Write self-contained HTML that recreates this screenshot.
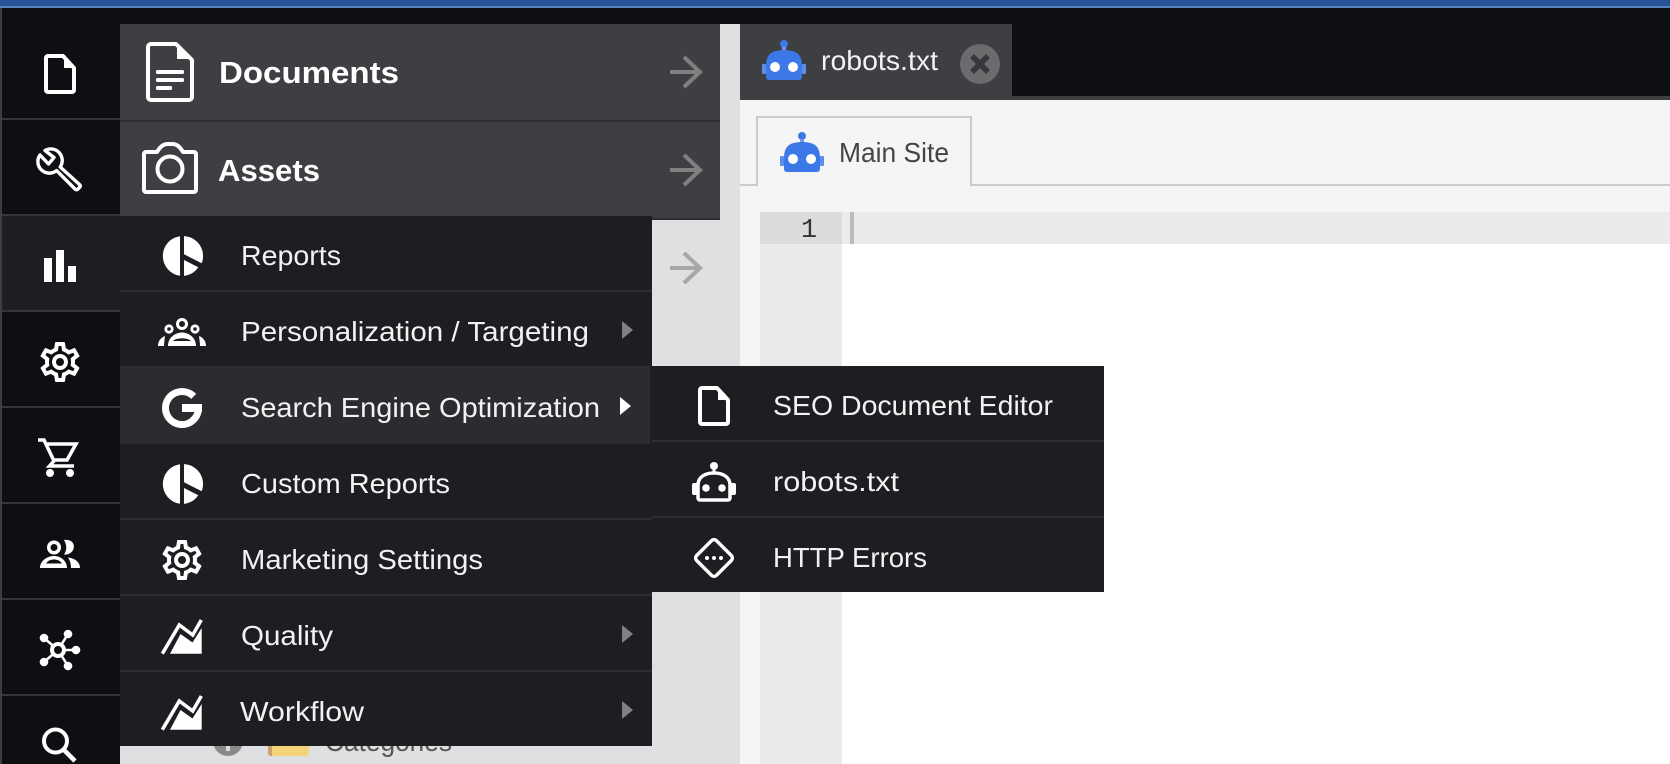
<!DOCTYPE html>
<html><head><meta charset="utf-8"><title>robots.txt</title>
<style>html,body{margin:0;padding:0;background:#fff}svg{display:block}text{font-family:"Liberation Sans",sans-serif}</style></head>
<body>
<svg width="1670" height="764" viewBox="0 0 1670 764" xmlns="http://www.w3.org/2000/svg">
<defs>
<path id="gear" d="M19.43 12.98c.04-.32.07-.64.07-.98s-.03-.66-.07-.98l2.11-1.65c.19-.15.24-.42.12-.64l-2-3.46c-.12-.22-.39-.3-.61-.22l-2.49 1c-.52-.4-1.08-.73-1.69-.98l-.38-2.65C14.46 2.18 14.25 2 14 2h-4c-.25 0-.46.18-.49.42l-.38 2.65c-.61.25-1.17.59-1.69.98l-2.49-1c-.23-.09-.49 0-.61.22l-2 3.46c-.13.22-.07.49.12.64l2.11 1.65c-.04.32-.07.65-.07.98s.03.66.07.98l-2.11 1.65c-.19.15-.24.42-.12.64l2 3.46c.12.22.39.3.61.22l2.49-1c.52.4 1.08.73 1.69.98l.38 2.65c.03.24.24.42.49.42h4c.25 0 .46-.18.49-.42l.38-2.65c.61-.25 1.17-.59 1.69-.98l2.49 1c.23.09.49 0 .61-.22l2-3.46c.12-.22.07-.49-.12-.64l-2.11-1.65zm-1.98-1.71c.04.31.05.52.05.73 0 .21-.02.43-.05.73l-.14 1.13.89.7 1.08.84-.7 1.21-1.27-.51-1.04-.42-.9.68c-.43.32-.84.56-1.25.73l-1.06.43-.16 1.13-.2 1.35h-1.4l-.19-1.35-.16-1.13-1.06-.43c-.43-.18-.83-.41-1.23-.71l-.91-.7-1.06.43-1.27.51-.7-1.21 1.08-.84.89-.7-.14-1.13c-.03-.31-.05-.54-.05-.74s.02-.43.05-.73l.14-1.13-.89-.7-1.08-.84.7-1.21 1.27.51 1.04.42.9-.68c.43-.32.84-.56 1.25-.73l1.06-.43.16-1.13.2-1.35h1.39l.19 1.35.16 1.13 1.06.43c.43.18.83.41 1.23.71l.91.7 1.06-.43 1.27-.51.7 1.21-1.07.85-.89.7.14 1.13zM12 8c-2.21 0-4 1.79-4 4s1.79 4 4 4 4-1.79 4-4-1.79-4-4-4zm0 6c-1.1 0-2-.9-2-2s.9-2 2-2 2 .9 2 2-.9 2-2 2z"/>
<g id="blue">
<circle cx="784" cy="44" r="4" fill="#3c78e8"/><rect x="782" y="47" width="4" height="5" fill="#6f9bec"/>
<path d="M766 66C766 54 772 50 784 50S802 54 802 66V77a3 3 0 0 1-3 3H769a3 3 0 0 1-3-3Z" fill="#3c78e8"/>
<rect x="762" y="64" width="4" height="10" rx="1" fill="#5a8eea"/><rect x="802" y="64" width="4" height="10" rx="1" fill="#5a8eea"/>
<circle cx="775" cy="67" r="5" fill="#fff"/><circle cx="793" cy="67" r="5" fill="#fff"/>
</g>
<g id="pie" fill="#fff">
<path d="M180 236.2A20 20 0 0 0 180 275.8Z"/><path d="M184 236.1A20 20 0 0 1 201.7 263.3L184 254.3Z"/><path d="M184 260L198.3 267.3A20 20 0 0 1 184 275.9Z"/>
</g>
<g id="chart" fill="#fff">
<path d="M162.300 653.700L179.300 625L192.700 635L201.300 620" fill="none" stroke="#fff" stroke-width="3.500"/>
<path d="M170 653.700L180.500 634L192.500 642.500L201.700 628V653.700Z"/>
</g>
<path id="arrow" d="M670 0H700M684-15L700 0L684 15" fill="none" stroke-width="4"/>
</defs>

<!-- base -->
<rect width="1670" height="764" fill="#fff"/>
<rect width="1670" height="6" fill="#285296"/>
<rect y="6" width="1670" height="2" fill="#5a82bb"/>
<rect y="8" width="1670" height="88" fill="#0d0f12"/>
<rect y="96" x="740" width="930" height="4" fill="#3d3f42"/>
<rect y="8" width="2" height="756" fill="#3c3e41"/>
<rect x="2" y="8" width="118" height="756" fill="#0d0f12"/>
<rect x="2" y="216" width="118" height="94" fill="#1c1e21"/>
<g fill="#333538">
<rect x="2" y="118" width="118" height="2"/><rect x="2" y="214" width="118" height="2"/><rect x="2" y="310" width="118" height="2"/><rect x="2" y="406" width="118" height="2"/><rect x="2" y="502" width="118" height="2"/><rect x="2" y="598" width="118" height="2"/><rect x="2" y="694" width="118" height="2"/>
</g>

<!-- tree panel -->
<rect x="120" y="24" width="620" height="740" fill="#dfe0e1"/>
<use href="#arrow" transform="translate(0,268)" stroke="#a6a7a8"/>
<circle cx="228" cy="741" r="15" fill="#8a8a8a"/><rect x="226" y="745" width="4" height="6" fill="#ddd"/>
<path d="M268 740H309V753a3 3 0 0 1-3 3H271a3 3 0 0 1-3-3Z" fill="#f5d378"/><path d="M268 740H272V756H271a3 3 0 0 1-3-3Z" fill="#c9a36a"/>
<text x="325" y="751" font-size="28" fill="#555" textLength="127" lengthAdjust="spacingAndGlyphs">Categories</text>

<!-- content -->
<rect x="740" y="100" width="930" height="664" fill="#f5f5f5"/>
<rect x="842" y="244" width="828" height="520" fill="#fff"/>
<rect x="760" y="244" width="82" height="520" fill="#ebebeb"/>
<rect x="760" y="212" width="82" height="32" fill="#dcdcdc"/>
<rect x="842" y="212" width="828" height="32" fill="#ebebeb"/>
<rect x="850" y="212" width="4" height="32" fill="#bbb"/>
<text x="809" y="237" font-size="27" fill="#333" text-anchor="middle" style="font-family:'Liberation Mono',monospace">1</text>
<rect x="740" y="184" width="16" height="2" fill="#ccc"/><rect x="972" y="184" width="698" height="2" fill="#ccc"/>
<path d="M757 186V117H971V186" fill="#f5f5f5" stroke="#ccc" stroke-width="2"/>
<use href="#blue" transform="translate(18,92)"/>
<text x="839" y="162" font-size="28" fill="#444" textLength="110" lengthAdjust="spacingAndGlyphs">Main Site</text>

<!-- editor tab -->
<rect x="740" y="24" width="272" height="76" fill="#3d3f42"/>
<use href="#blue"/>
<text x="821" y="70" font-size="28" fill="#f2f2f2" textLength="117" lengthAdjust="spacingAndGlyphs">robots.txt</text>
<circle cx="980" cy="64" r="20" fill="#6a6b6c"/>
<path d="M972 56L988 72M988 56L972 72" stroke="#35373a" stroke-width="5.500" fill="none"/>

<!-- top panels -->
<rect x="120" y="24" width="600" height="96" fill="#3d3f42"/>
<rect x="120" y="120" width="600" height="2" fill="#2c2e30"/>
<rect x="120" y="122" width="600" height="96" fill="#3d3f42"/>
<rect x="120" y="218" width="600" height="2" fill="#2b2c2e"/>
<use href="#arrow" transform="translate(0,72)" stroke="#808080"/>
<use href="#arrow" transform="translate(0,170)" stroke="#808080"/>
<path d="M148 47a3 3 0 0 1 3-3H176L192 60V97a3 3 0 0 1-3 3H151a3 3 0 0 1-3-3Z" fill="none" stroke="#fff" stroke-width="4" stroke-linejoin="round"/>
<path d="M177 46V59H192Z" fill="#fff"/>
<rect x="156" y="70" width="28" height="4" rx="1.500" fill="#fff"/><rect x="156" y="78" width="28" height="4" rx="1.500" fill="#fff"/><rect x="156" y="86" width="16" height="4" rx="1.500" fill="#fff"/>
<text x="219" y="83" font-size="31" font-weight="bold" fill="#fff" textLength="180" lengthAdjust="spacingAndGlyphs">Documents</text>
<path d="M146 152H157C160 147 163 144 168 144H172C177 144 180 147 183 152H194a2 2 0 0 1 2 2V190a2 2 0 0 1-2 2H146a2 2 0 0 1-2-2V154a2 2 0 0 1 2-2Z" fill="none" stroke="#fff" stroke-width="4" stroke-linejoin="round"/>
<circle cx="170" cy="169" r="12.500" fill="none" stroke="#fff" stroke-width="4"/>
<text x="218" y="181" font-size="31" font-weight="bold" fill="#fff" textLength="102" lengthAdjust="spacingAndGlyphs">Assets</text>

<!-- left rail icons -->
<path d="M46 58a2 2 0 0 1 2-2H63L74 68V90a2 2 0 0 1-2 2H48a2 2 0 0 1-2-2Z" fill="none" stroke="#fff" stroke-width="4" stroke-linejoin="round"/>
<path d="M64 56V68H74Z" fill="#fff"/>
<path d="M45 150.500L54 157.500L48.500 164L40 155A11.500 11.500 0 0 0 56.600 170.600L75 189Q76.500 190.500 78 189L79.500 187.500Q81 186 79.500 184.500L60.200 167A11.500 11.500 0 0 0 45 150.500Z" fill="none" stroke="#fff" stroke-width="3.400" stroke-linejoin="round"/>
<g fill="#fff"><rect x="44" y="258" width="8" height="24"/><rect x="56" y="250" width="8" height="32"/><rect x="68" y="266" width="8" height="16"/></g>
<use href="#gear" transform="translate(36,338) scale(2)" fill="#fff"/>
<path d="M38 440H44L54 461L49.500 466H74M45.500 444H76L67 460H54" fill="none" stroke="#fff" stroke-width="3.500"/>
<circle cx="50" cy="473" r="4" fill="#fff"/><circle cx="70" cy="473" r="4" fill="#fff"/>
<circle cx="54" cy="547.500" r="5.250" fill="none" stroke="#fff" stroke-width="3.500"/>
<path d="M64 540C72 539 75 544 73.500 549C72 553 68 555 64 554.500C67 550 67 545 64 540Z" fill="#fff"/>
<path fill-rule="evenodd" fill="#fff" d="M40 568C40 561 47 556 54 556S67 561 67 568ZM46 563.500H62C60 560.500 57 559.500 54 559.500S48 560.500 46 563.500Z"/>
<path d="M68 557.500C74 558 80 561.500 80 568H71C71 564 70 560.500 68 557.500Z" fill="#fff"/>
<g stroke="#fff" stroke-width="2.500"><path d="M44 638L58 650M68 634L58 650M76 650H58M68 666L58 650M44 662L58 650"/></g>
<g fill="#fff"><circle cx="44" cy="638" r="4.300"/><circle cx="68" cy="634" r="4.300"/><circle cx="76" cy="650" r="4.300"/><circle cx="68" cy="666" r="4.300"/><circle cx="44" cy="662" r="4.300"/></g>
<circle cx="58" cy="650" r="6" fill="#0d0f12" stroke="#fff" stroke-width="4"/>
<circle cx="55.500" cy="741" r="11.500" fill="none" stroke="#fff" stroke-width="4"/>
<path d="M64 750L75 761" fill="none" stroke="#fff" stroke-width="4.500"/>

<!-- main menu -->
<rect x="120" y="216" width="532" height="530" fill="#1c1e21"/>
<rect x="120" y="366" width="530" height="78" fill="#2a2c30"/>
<g fill="#2c2e31">
<rect x="120" y="290" width="532" height="2"/><rect x="120" y="518" width="532" height="2"/><rect x="120" y="594" width="532" height="2"/><rect x="120" y="670" width="532" height="2"/>
</g>
<g font-size="28" fill="#f2f2f2">
<text x="241" y="265" textLength="100" lengthAdjust="spacingAndGlyphs">Reports</text>
<text x="241" y="341" textLength="348" lengthAdjust="spacingAndGlyphs">Personalization / Targeting</text>
<text x="241" y="417" textLength="359" lengthAdjust="spacingAndGlyphs">Search Engine Optimization</text>
<text x="241" y="493" textLength="209" lengthAdjust="spacingAndGlyphs">Custom Reports</text>
<text x="241" y="569" textLength="242" lengthAdjust="spacingAndGlyphs">Marketing Settings</text>
<text x="241" y="645" textLength="92" lengthAdjust="spacingAndGlyphs">Quality</text>
<text x="240" y="721" textLength="124" lengthAdjust="spacingAndGlyphs">Workflow</text>
</g>
<use href="#pie"/>
<use href="#pie" transform="translate(0,228)"/>
<circle cx="182" cy="324" r="4.500" fill="none" stroke="#fff" stroke-width="3"/>
<circle cx="169" cy="329" r="3.200" fill="none" stroke="#fff" stroke-width="2.800"/>
<circle cx="195" cy="329" r="3.200" fill="none" stroke="#fff" stroke-width="2.800"/>
<path fill-rule="evenodd" fill="#fff" d="M168 346C168 337 176 332.500 182 332.500S196 337 196 346ZM173 341C176 337.500 188 337.500 191 341Z"/>
<path d="M158 346C158 341 161 337.500 165 336C164.500 340 164 343 164 346Z" fill="#fff"/>
<path d="M206 346C206 341 203 337.500 199 336C199.500 340 200 343 200 346Z" fill="#fff"/>
<path d="M193.700 396.400A16.500 16.500 0 1 0 198.500 408" fill="none" stroke="#fff" stroke-width="7"/>
<rect x="182" y="404" width="20" height="8" fill="#fff"/>
<use href="#gear" transform="translate(158,536) scale(2)" fill="#fff"/>
<use href="#chart"/>
<use href="#chart" transform="translate(0,76)"/>
<path d="M622 321L633 330L622 339Z" fill="#808080"/>
<path d="M620 397L631 406L620 415Z" fill="#fff"/>
<path d="M622 625L633 634L622 643Z" fill="#808080"/>
<path d="M622 701L633 710L622 719Z" fill="#808080"/>

<!-- submenu -->
<rect x="652" y="366" width="452" height="226" fill="#1c1e21"/>
<rect x="652" y="440" width="452" height="2" fill="#2c2e31"/>
<rect x="652" y="516" width="452" height="2" fill="#2c2e31"/>
<g font-size="28" fill="#f2f2f2">
<text x="773" y="415" textLength="280" lengthAdjust="spacingAndGlyphs">SEO Document Editor</text>
<text x="773" y="491" textLength="126" lengthAdjust="spacingAndGlyphs">robots.txt</text>
<text x="773" y="567" textLength="154" lengthAdjust="spacingAndGlyphs">HTTP Errors</text>
</g>
<path d="M700 390a2 2 0 0 1 2-2H717L728 400V422a2 2 0 0 1-2 2H702a2 2 0 0 1-2-2Z" fill="none" stroke="#fff" stroke-width="4" stroke-linejoin="round"/>
<path d="M718 388V400H728Z" fill="#fff"/>
<circle cx="714" cy="466" r="4" fill="#fff"/><rect x="712.500" y="469" width="3" height="5" fill="#fff"/>
<path d="M698 485C698 477 705 473 714 473S730 477 730 485V498a2 2 0 0 1-2 2H700a2 2 0 0 1-2-2Z" fill="none" stroke="#fff" stroke-width="3.500" stroke-linejoin="round"/>
<rect x="692" y="483" width="7" height="12" rx="2" fill="#fff"/><rect x="729" y="483" width="7" height="12" rx="2" fill="#fff"/>
<circle cx="706" cy="488" r="3.800" fill="#fff"/><circle cx="722" cy="488" r="3.800" fill="#fff"/>
<rect x="700" y="544" width="28" height="28" rx="3.500" fill="none" stroke="#fff" stroke-width="3.500" transform="rotate(45 714 558)"/>
<g fill="#fff"><circle cx="707" cy="558" r="2"/><circle cx="714" cy="558" r="2"/><circle cx="721" cy="558" r="2"/></g>
</svg>
</body></html>
